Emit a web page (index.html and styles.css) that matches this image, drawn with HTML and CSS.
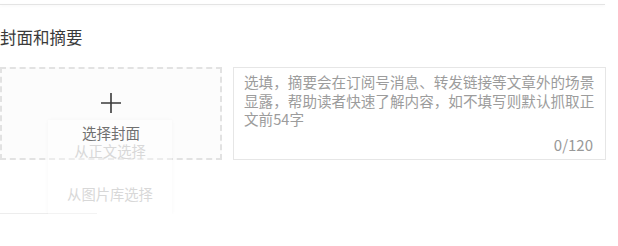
FILE: index.html
```html
<!DOCTYPE html>
<html lang="zh-CN">
<head>
<meta charset="utf-8">
<link rel="stylesheet" href="styles.css">
</head>
<body>
<div class="topline"></div>
<h2 class="title">封面和摘要</h2>
<div class="row">
  <div class="cover">
    <svg class="plus" width="22" height="22" viewBox="0 0 22 22"><path d="M11 1v20M1 11h20" stroke="#3a3a3a" stroke-width="1.6" fill="none"/></svg>
    <div class="cover-label">选择封面</div>
    <div class="menu">
      <div class="menu-item">从正文选择</div>
      <div class="menu-item">从图片库选择</div>
    </div>
  </div>
  <div class="summary">
    <div class="placeholder">选填，摘要会在订阅号消息、转发链接等文章外的场景显露，帮助读者快速了解内容，如不填写则默认抓取正文前54字</div>
    <div class="count">0/120</div>
  </div>
</div>
<div class="bottomline"></div>
</body>
</html>
```
FILE: styles.css
```css
html, body {
  margin: 0;
  padding: 0;
  background: #fff;
}
body {
  font-family: "Noto Sans CJK SC", "Noto Sans", sans-serif;
  color: #333;
}
.topline {
  margin-top: 4px;
  width: 605px;
  height: 1px;
  background: #e4e4e4;
  box-shadow: 0 1px 3px rgba(0,0,0,0.06);
}
.title {
  margin: 21px 0 0 0;
  font-size: 16.5px;
  font-weight: normal;
  line-height: 22px;
  color: #3a3a3a;
}
.row {
  display: flex;
  gap: 11px;
  margin-top: 19px;
}
.cover {
  position: relative;
  box-sizing: border-box;
  width: 222px;
  height: 93px;
  border: 2px dashed #e2e2e2;
  background: #fcfcfc;
  display: flex;
  flex-direction: column;
  align-items: center;
}
.plus {
  margin-top: 23px;
}
.cover-label {
  position: relative;
  z-index: 2;
  margin-top: 9px;
  font-size: 14.5px;
  line-height: 20px;
  color: #707070;
}
.menu {
  position: absolute;
  z-index: 1;
  left: 46px;
  top: 51px;
  width: 124px;
  height: 95px;
  background: rgba(255,255,255,0.35);
  box-shadow: 0 0 4px rgba(0,0,0,0.035);
  display: flex;
  flex-direction: column;
  padding-top: 9px;
  box-sizing: border-box;
}
.menu-item {
  height: 43px;
  line-height: 43px;
  text-align: center;
  font-size: 14.3px;
  color: #d8d8d8;
}
.summary {
  box-sizing: border-box;
  width: 373px;
  height: 93px;
  border: 1px solid #e6e6e6;
  padding: 5px 4px 4px 10px;
  display: flex;
  flex-direction: column;
  justify-content: space-between;
}
.placeholder {
  font-size: 14.6px;
  line-height: 18.5px;
  color: #9c9c9c;
}
.count {
  align-self: flex-end;
  margin-right: 8px;
  font-size: 15px;
  line-height: 20px;
  color: #999;
}
.bottomline {
  margin-top: 53px;
  width: 97px;
  height: 1px;
  background: #ededed;
}
```
